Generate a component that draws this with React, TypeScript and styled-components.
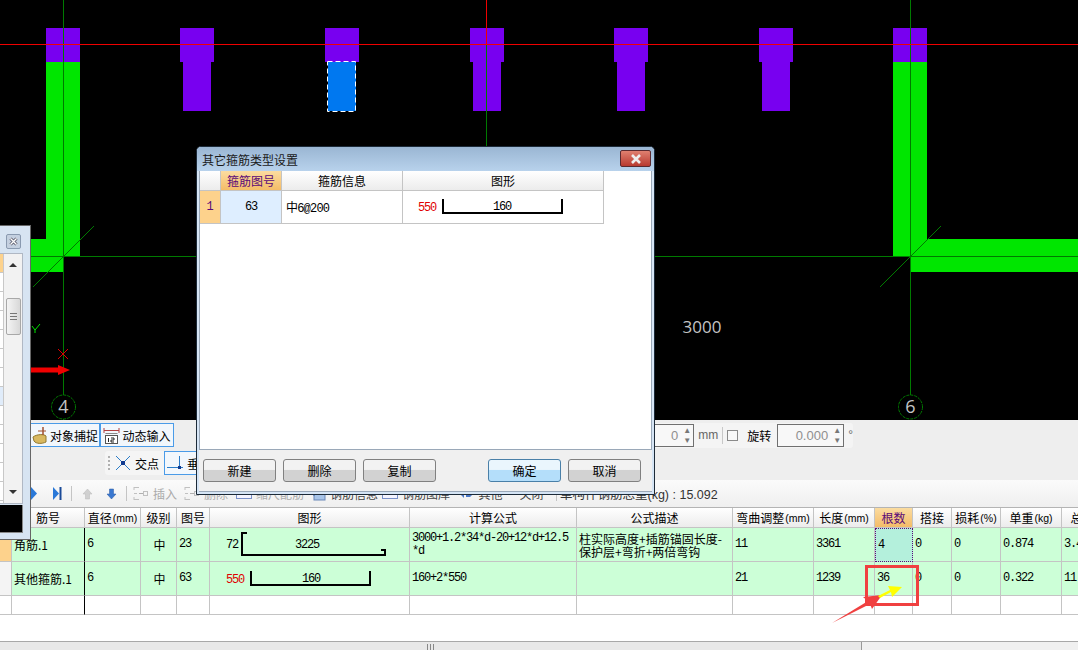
import * as React from 'react';
import styled, { createGlobalStyle } from 'styled-components';

const CJK = '"Noto Sans CJK SC", "Liberation Sans", sans-serif';
const MONO = '"Liberation Mono", "Noto Sans CJK SC", monospace';

// ------------------------------------
// Data
// ------------------------------------

const COLUMNS = '12px 73px 56px 36px 33px 200px 167px 156px 81px 61px 38px 39px 49px 61px 61px';

const HEADERS = [
  { label: '' },
  { label: '筋号' },
  { label: '直径', unit: '(mm)' },
  { label: '级别' },
  { label: '图号' },
  { label: '图形' },
  { label: '计算公式' },
  { label: '公式描述' },
  { label: '弯曲调整', unit: '(mm)' },
  { label: '长度', unit: '(mm)' },
  { label: '根数' },
  { label: '搭接' },
  { label: '损耗', unit: '(%)' },
  { label: '单重', unit: '(kg)' },
  { label: '总重', unit: '(kg)' },
];

const CAPS = [46, 180, 325, 470, 614, 759, 893];
const STEMS = [183, 473, 617, 762];

// ------------------------------------
// Canvas
// ------------------------------------

const CadCanvas = () => (
  <CanvasWrap>
    <svg width="1078" height="420" viewBox="0 0 1078 420">
      <g fill="#00e600">
        <rect x="46" y="62" width="34" height="194" />
        <rect x="31" y="239" width="32" height="33" />
        <rect x="893" y="62" width="34" height="194" />
        <rect x="910" y="239" width="168" height="33" />
      </g>
      <g fill="#7800f0">
        {CAPS.map((x) => (
          <rect key={x} x={x} y="28" width="34" height="34" />
        ))}
        {STEMS.map((x) => (
          <rect key={x} x={x} y="62" width="28" height="49" />
        ))}
      </g>
      <rect x="328" y="62" width="28" height="49" fill="#0078f0" />
      <rect x="327.5" y="61.5" width="28" height="50" fill="none" stroke="#fff" strokeDasharray="5 3" />
      <g stroke="#007a00" strokeWidth="1" fill="none">
        <path d="M63.5 0V395M63.5 419V420M486.5 44V260M910.5 0V395M0 256.5H1078" />
        <path d="M33 287L94 226M880 287L941 226" />
        <circle cx="63.5" cy="407" r="12" strokeDasharray="3 1" />
        <circle cx="910.5" cy="407" r="12" strokeDasharray="3 1" />
      </g>
      <path d="M0 44.5H1078M486.5 0V44" stroke="#f00000" strokeWidth="1" />
      <path d="M32 326L35 330L40 324M35 330V333" stroke="#00e600" fill="none" />
      <path d="M58 349L68 359M68 349L58 359" stroke="#e00000" />
      <path d="M31 367.5H58V365L70 370L58 375V372.5H31Z" fill="#f00000" />
      <CanvasNumber x="63.5" y="413" fontSize="18">4</CanvasNumber>
      <CanvasNumber x="910.5" y="413" fontSize="18">6</CanvasNumber>
      <CanvasNumber x="702" y="333" fontSize="17">3000</CanvasNumber>
    </svg>
  </CanvasWrap>
);

// ------------------------------------
// Rebar shapes
// ------------------------------------

const ShapeHook = () => (
  <svg width="198" height="32" viewBox="0 0 198 32">
    <ShapeText x="16" y="20">72</ShapeText>
    <path d="M36 6V5H32V27H175V22H171" fill="none" stroke="#000" strokeWidth="2" />
    <ShapeText x="97" y="20" textAnchor="middle">3225</ShapeText>
  </svg>
);

const ShapeBracket = () => (
  <svg width="198" height="32" viewBox="0 0 198 32">
    <ShapeText x="16" y="21" fill="#e00000">550</ShapeText>
    <path d="M41 9V23H160V9" fill="none" stroke="#000" strokeWidth="2" />
    <ShapeText x="101" y="20" textAnchor="middle">160</ShapeText>
  </svg>
);

// ------------------------------------
// Small toolbar icons
// ------------------------------------

const SnapIcon = () => (
  <svg width="16" height="18" viewBox="0 0 16 18">
    <path d="M1 11C5 8 12 8 14 10L14 16C10 18 4 18 2 15Z" fill="#d8b860" stroke="#907830" />
    <path d="M11 1V9" stroke="#a05030" strokeWidth="1.5" />
    <path d="M6 5H14" stroke="#a05030" />
  </svg>
);

const InputIcon = () => (
  <svg width="17" height="17" viewBox="0 0 17 17">
    <path d="M1 1V6M16 1V6M1 3.5H16" stroke="#b04040" fill="none" />
    <rect x="2.5" y="8.5" width="12" height="8" fill="#fff" stroke="#555" />
    <path d="M2.5 6.5H14.5" stroke="#888" />
    <path d="M5.5 11V15M8 11H11V13H8V15H11" stroke="#222" fill="none" />
  </svg>
);

const CrossIcon = () => (
  <svg width="16" height="16" viewBox="0 0 16 16">
    <path d="M1 1L15 15M15 1L1 15" stroke="#2a7cc8" />
    <rect x="6" y="6" width="4" height="4" fill="#103a90" />
  </svg>
);

const PerpIcon = () => (
  <svg width="16" height="16" viewBox="0 0 16 16">
    <path d="M0 12.5H16M12.5 1V12" stroke="#2a7cc8" />
    <rect x="11" y="11" width="3" height="3" fill="#103a90" />
  </svg>
);

const PlayIcon = (props: { last?: boolean }) => (
  <svg width="10" height="13" viewBox="0 0 10 13">
    <path d="M1 0L7 6.5L1 13Z" fill="#2a78d8" />
    {props.last && <path d="M8.5 0V13" stroke="#1a4a98" strokeWidth="2" />}
  </svg>
);

const ArrowIcon = (props: { up?: boolean; off?: boolean }) => (
  <svg width="11" height="12" viewBox="0 0 11 12">
    <path
      d={props.up ? 'M5.5 1L10 6H7.5V11H3.5V6H1Z' : 'M5.5 11L10 6H7.5V1H3.5V6H1Z'}
      fill={props.off ? '#d0d0d0' : '#3a78d0'}
      stroke={props.off ? '#b8b8b8' : '#2a58a0'}
      strokeWidth="0.5"
    />
  </svg>
);

const InsertIcon = () => (
  <svg width="16" height="15" viewBox="0 0 16 15">
    <path d="M1 1.5H6M1 7.5H4M1 13.5H6M1 1V4M1 11V14" stroke="#c0c0c0" fill="none" />
    <path d="M6 7.5H10" stroke="#b0b0b0" />
    <rect x="10.5" y="5.5" width="4" height="4" fill="none" stroke="#c0c0c0" />
  </svg>
);

const InfoIcon = () => (
  <svg width="16" height="14" viewBox="0 0 16 14">
    <rect x="4" y="3" width="11" height="10" fill="#a8c4e8" stroke="#6a88b8" />
    <path d="M1 6L6 1L9 4L4 9Z" fill="#4a70b0" />
  </svg>
);

const LibIcon = () => (
  <svg width="16" height="12" viewBox="0 0 16 12">
    <rect x="0.5" y="2.5" width="15" height="8" fill="#f4f4ff" stroke="#7a90c8" />
    <path d="M3 6.5H13" stroke="#c04040" strokeDasharray="2 1" />
  </svg>
);

const MoreIcon = () => (
  <svg width="15" height="12" viewBox="0 0 15 12">
    <path d="M1 6L5 2V10ZM7 3H11L14 6L11 9H7Z" fill="#4a78c8" />
  </svg>
);

// ------------------------------------
// Dialog
// ------------------------------------

const SettingsDialog = () => (
  <Dialog>
    <DialogTitle>
      其它箍筋类型设置
      <CloseButton>
        <svg width="14" height="10" viewBox="0 0 14 10">
          <path d="M3 1L11 9M11 1L3 9" stroke="#eee" strokeWidth="2.6" />
        </svg>
      </CloseButton>
    </DialogTitle>
    <DialogBody>
      <DialogGrid>
        <DialogHead />
        <DialogHead $active>箍筋图号</DialogHead>
        <DialogHead>箍筋信息</DialogHead>
        <DialogHead>图形</DialogHead>
        <DialogIndex>1</DialogIndex>
        <DialogPicked>63</DialogPicked>
        <DialogInfo>中6@200</DialogInfo>
        <DialogShape>
          <svg width="198" height="30" viewBox="0 0 198 30">
            <ShapeText x="15" y="20" fill="#e00000">550</ShapeText>
            <path d="M40 8V22H159V8" fill="none" stroke="#000" strokeWidth="2" />
            <ShapeText x="99" y="19" textAnchor="middle">160</ShapeText>
          </svg>
        </DialogShape>
      </DialogGrid>
    </DialogBody>
    <DialogFooter>
      <DialogButton>新建</DialogButton>
      <DialogButton>删除</DialogButton>
      <DialogButton>复制</DialogButton>
      <FooterGap />
      <DialogButton $primary>确定</DialogButton>
      <DialogButton>取消</DialogButton>
    </DialogFooter>
  </Dialog>
);

// ------------------------------------
// Left floating panel
// ------------------------------------

const FloatingPanel = () => (
  <Panel>
    <PanelHead>
      <PanelClose>
        <svg width="9" height="9" viewBox="0 0 9 9">
          <path d="M1.5 1.5L7.5 7.5M7.5 1.5L1.5 7.5" stroke="#556" strokeWidth="3" />
          <path d="M1.5 1.5L7.5 7.5M7.5 1.5L1.5 7.5" stroke="#fff" strokeWidth="1.4" />
        </svg>
      </PanelClose>
    </PanelHead>
    <PanelBody>
      <PanelList>
        {Array.from({ length: 13 }).map((_, i) => (
          <PanelRow key={i} $tone={i === 0 ? 'head' : i === 7 ? 'picked' : undefined} />
        ))}
      </PanelList>
      <PanelScroll>
        <ScrollUp />
        <ScrollThumb>
          <ThumbGrip />
        </ScrollThumb>
        <ScrollDown />
      </PanelScroll>
    </PanelBody>
    <BlackBox />
  </Panel>
);

// ------------------------------------
// Rebar table
// ------------------------------------

const RebarTable = () => (
  <Table>
    <TableRow>
      {HEADERS.map((h, i) => (
        <HeadCell key={i} $active={h.label === '根数'}>
          {h.label}
          {h.unit && <HeadUnit>{h.unit}</HeadUnit>}
        </HeadCell>
      ))}
    </TableRow>
    <DataRow>
      <IndexCell $picked />
      <NameCell>角筋.1</NameCell>
      <Cell $mono>6</Cell>
      <Cell $center>中</Cell>
      <Cell $mono>23</Cell>
      <ShapeCell><ShapeHook /></ShapeCell>
      <Cell $mono><span>3000+1.2*34*d-20+12*d+12.5<br />*d</span></Cell>
      <Cell><span>柱实际高度+插筋锚固长度-<br />保护层+弯折+两倍弯钩</span></Cell>
      <Cell $mono>11</Cell>
      <Cell $mono>3361</Cell>
      <PickedCell>4</PickedCell>
      <Cell $mono>0</Cell>
      <Cell $mono>0</Cell>
      <Cell $mono>0.874</Cell>
      <Cell $mono>3.496</Cell>
    </DataRow>
    <DataRow>
      <IndexCell />
      <NameCell>其他箍筋.1</NameCell>
      <Cell $mono>6</Cell>
      <Cell $center>中</Cell>
      <Cell $mono>63</Cell>
      <ShapeCell><ShapeBracket /></ShapeCell>
      <Cell $mono>160+2*550</Cell>
      <Cell />
      <Cell $mono>21</Cell>
      <Cell $mono>1239</Cell>
      <Cell $mono>36</Cell>
      <Cell $mono>0</Cell>
      <Cell $mono>0</Cell>
      <Cell $mono>0.322</Cell>
      <Cell $mono>11.592</Cell>
    </DataRow>
    <EmptyRow>
      {HEADERS.map((_, i) => (i === 1 ? <EmptyName key={i} /> : <EmptyCell key={i} />))}
    </EmptyRow>
  </Table>
);

// ------------------------------------
// App
// ------------------------------------

export default function App() {
  return (
    <>
      <GlobalStyle />
      <Page>
        <CadCanvas />
        <Toolbars>
          <SnapRow>
            <ToggleButton $width={70}><SnapIcon />对象捕捉</ToggleButton>
            <ToggleButton $width={74}><InputIcon />动态输入</ToggleButton>
            <OffsetGroup>
              <SpinBox $width={60}>0<SpinArrows>▲<br />▼</SpinArrows></SpinBox>
              <Unit>mm</Unit>
              <ThinSep />
              <CheckBox />
              <Label>旋转</Label>
              <SpinBox $width={67}>0.000<SpinArrows>▲<br />▼</SpinArrows></SpinBox>
              <Unit>°</Unit>
            </OffsetGroup>
          </SnapRow>
          <ModeRow>
            <Grip />
            <ModeItem><CrossIcon />交点</ModeItem>
            <ModeItem $on><PerpIcon />垂点</ModeItem>
          </ModeRow>
          <ActionRow>
            <IconSlot $width={22}><PlayIcon /></IconSlot>
            <IconSlot $width={22}><PlayIcon last /></IconSlot>
            <BarSep />
            <IconSlot $width={24}><ArrowIcon up off /></IconSlot>
            <IconSlot $width={24}><ArrowIcon /></IconSlot>
            <BarSep />
            <ActionItem $width={50} $off><InsertIcon />插入</ActionItem>
            <ActionItem $width={52} $off><InsertIcon />删除</ActionItem>
            <ActionItem $width={76} $off><LibIcon />缩尺配筋</ActionItem>
            <ActionItem $width={72}><InfoIcon />钢筋信息</ActionItem>
            <ActionItem $width={72}><LibIcon />钢筋图库</ActionItem>
            <ActionItem $width={58}><MoreIcon />其他</ActionItem>
            <ActionItem $width={43}>关闭</ActionItem>
            <BarSep />
            <TotalWeight>单构件钢筋总重(kg) : 15.092</TotalWeight>
          </ActionRow>
        </Toolbars>
        <RebarTable />
        <TableBlank />
        <HScroll>
          <HThumb>
            <HGrip />
          </HThumb>
        </HScroll>

        <FloatingPanel />
        <SettingsDialog />

        <Marks width="1078" height="650" viewBox="0 0 1078 650">
          <rect x="866.5" y="566.5" width="51" height="38" fill="none" stroke="#f04040" strokeWidth="3" />
          <path d="M832 623L868 601L863 597L882 595L872 609L870 604Z" fill="#f04040" />
          <path d="M878 596L890 590L888 586L902 587L892 597L891 592L880 598Z" fill="#ffff00" />
        </Marks>
      </Page>
    </>
  );
}

// ------------------------------------
// Styles
// ------------------------------------

const GlobalStyle = createGlobalStyle`
  html, body {
    margin: 0;
    padding: 0;
    overflow: hidden;
    background: #fff;
  }
`;

const Page = styled.div`
  position: relative;
  display: flex;
  flex-direction: column;
  width: 1078px;
  height: 650px;
  overflow: hidden;
  font: 12px ${CJK};
  color: #000;
`;

const CanvasWrap = styled.div`
  height: 420px;
  flex: none;
  background: #000;

  svg {
    display: block;
  }
`;

const CanvasNumber = styled.text`
  fill: #c4c4c4;
  font-family: 'Open Sans', sans-serif;
  text-anchor: middle;
`;

const ShapeText = styled.text`
  font: 12px 'Liberation Mono', monospace;
  letter-spacing: -1.2px;
`;

const Toolbars = styled.div`
  display: flex;
  flex-direction: column;
  height: 87px;
  flex: none;
  background: #eeeeee;
  border-bottom: 1px solid #b4b4b4;
`;

const SnapRow = styled.div`
  display: flex;
  align-items: center;
  height: 24px;
  margin-top: 3px;
  padding-left: 30px;
`;

const ToggleButton = styled.div<{ $width: number }>`
  display: flex;
  align-items: center;
  justify-content: center;
  gap: 2px;
  box-sizing: border-box;
  width: ${(p) => p.$width}px;
  height: 24px;
  border: 1px solid #4a9be8;
  background: #f2f7fc;
  white-space: nowrap;
`;

const OffsetGroup = styled.div`
  display: flex;
  align-items: center;
  gap: 4px;
  height: 25px;
  margin-left: auto;
  margin-right: 225px;
  background: #f4f4f4;
  border-radius: 0 3px 3px 0;
`;

const SpinBox = styled.div<{ $width: number }>`
  position: relative;
  box-sizing: border-box;
  width: ${(p) => p.$width}px;
  height: 23px;
  padding-right: 15px;
  border: 1px solid #707070;
  background: #f8f8f8;
  color: #8f8f8f;
  font: 13px/21px 'Liberation Sans', sans-serif;
  text-align: right;
`;

const SpinArrows = styled.span`
  position: absolute;
  right: 2px;
  top: 1px;
  color: #777;
  font-size: 8px;
  line-height: 10px;
`;

const Unit = styled.span`
  color: #666;
  font: 12px 'Liberation Sans', sans-serif;
`;

const ThinSep = styled.span`
  width: 1px;
  height: 17px;
  background: #c8c8c8;
`;

const CheckBox = styled.span`
  box-sizing: border-box;
  width: 11px;
  height: 11px;
  border: 1px solid #8a8a8a;
  background: #f8f8f8;
`;

const Label = styled.span`
  margin: 0 2px 0 5px;
`;

const ModeRow = styled.div`
  display: flex;
  align-items: center;
  gap: 2px;
  align-self: flex-start;
  width: 110px;
  height: 24px;
  margin: 4px 0 0 105px;
  padding-left: 3px;
  background: #f5f5f5;
  border-radius: 3px 0 0 3px;
`;

const Grip = styled.span`
  width: 2px;
  height: 14px;
  background: repeating-linear-gradient(#b0b0b0 0 2px, transparent 2px 4px);
`;

const ModeItem = styled.div<{ $on?: boolean }>`
  display: flex;
  align-items: center;
  flex: none;
  gap: 4px;
  height: 24px;
  padding: 0 2px;
  box-sizing: border-box;
  white-space: nowrap;
  border: 1px solid ${(p) => (p.$on ? '#4a9be8' : 'transparent')};
  background: ${(p) => (p.$on ? '#f2f7fc' : 'transparent')};
`;

const ActionRow = styled.div`
  display: flex;
  align-items: center;
  height: 27px;
  margin-top: 5px;
  padding-left: 24px;
  color: #444;
  background: linear-gradient(#fbfbfb, #efefef);
`;

const IconSlot = styled.span<{ $width: number }>`
  display: flex;
  align-items: center;
  justify-content: center;
  flex: none;
  width: ${(p) => p.$width}px;
`;

const BarSep = styled.span`
  flex: none;
  width: 1px;
  height: 15px;
  margin: 0 3px;
  background: #c4c4c4;
`;

const ActionItem = styled.span<{ $width: number; $off?: boolean }>`
  display: flex;
  align-items: center;
  justify-content: center;
  flex: none;
  gap: 4px;
  width: ${(p) => p.$width}px;
  color: ${(p) => (p.$off ? '#aaa' : '#444')};
  white-space: nowrap;
`;

const TotalWeight = styled.span`
  white-space: nowrap;
  color: #333;
  font: 12.5px 'Liberation Sans', ${CJK};
`;

const Table = styled.div`
  flex: none;
  width: 1078px;
  overflow: hidden;
`;

const TableRow = styled.div`
  display: grid;
  grid-template-columns: ${COLUMNS};
  height: 20px;
`;

const HeadCell = styled.div<{ $active?: boolean }>`
  display: flex;
  align-items: center;
  justify-content: center;
  overflow: hidden;
  box-sizing: border-box;
  border-right: 1px solid #c4c4c4;
  border-bottom: 1px solid #c4c4c4;
  white-space: nowrap;
  color: ${(p) => (p.$active ? '#5a0a78' : '#000')};
  background: ${(p) =>
    p.$active ? 'linear-gradient(#fbdca0, #f4bc68)' : 'linear-gradient(#fff, #ececec)'};
`;

const HeadUnit = styled.span`
  margin-left: 1px;
  font: 10.5px 'Liberation Sans', sans-serif;
`;

const DataRow = styled(TableRow)`
  height: 34px;
`;

const Cell = styled.div<{ $mono?: boolean; $center?: boolean }>`
  display: flex;
  align-items: center;
  box-sizing: border-box;
  overflow: hidden;
  padding-left: 2px;
  border-right: 1px solid #c4c4c4;
  border-bottom: 1px solid #c4c4c4;
  background: #ccffd7;
  white-space: nowrap;
  line-height: 13px;
  justify-content: ${(p) => (p.$center ? 'center' : 'flex-start')};
  font-family: ${(p) => (p.$mono ? MONO : CJK)};
  letter-spacing: ${(p) => (p.$mono ? '-1.2px' : '0')};
`;

const NameCell = styled(Cell)`
  border-right-color: #000;
`;

const ShapeCell = styled.div`
  box-sizing: border-box;
  border-right: 1px solid #c4c4c4;
  border-bottom: 1px solid #c4c4c4;
  background: #ccffd7;

  svg {
    display: block;
  }
`;

const PickedCell = styled(Cell).attrs({ $mono: true })`
  background: #b4f0dc;
  border: 1px dotted #5a0a78;
`;

const IndexCell = styled.div<{ $picked?: boolean }>`
  border-right: 1px solid #c4c4c4;
  border-bottom: 1px solid #c4c4c4;
  box-sizing: border-box;
  background: ${(p) => (p.$picked ? '#fdd28c' : '#f4f4f4')};
`;

const EmptyRow = styled(TableRow)`
  height: 19px;
`;

const EmptyCell = styled.div`
  box-sizing: border-box;
  border-right: 1px solid #c4c4c4;
  border-bottom: 1px solid #c4c4c4;
`;

const EmptyName = styled(EmptyCell)`
  border-right-color: #000;
`;

const TableBlank = styled.div`
  flex: 1;
  background: #fff;
`;

const HScroll = styled.div`
  flex: none;
  height: 8px;
  background: #f0f0f0;
  border-top: 1px solid #a8a8a8;
`;

const HThumb = styled.div`
  display: flex;
  justify-content: center;
  box-sizing: border-box;
  width: 862px;
  height: 8px;
  border-right: 1px solid #999;
  background: #e8e8e8;
`;

const HGrip = styled.span`
  width: 7px;
  height: 6px;
  margin-top: 2px;
  background: repeating-linear-gradient(90deg, #888 0 1px, transparent 1px 3px);
`;

const Panel = styled.div`
  position: absolute;
  left: 0;
  top: 225px;
  display: flex;
  flex-direction: column;
  box-sizing: border-box;
  width: 31px;
  height: 315px;
  border: 1px solid #666;
  border-left: none;
  background: #d7e4f2;
`;

const PanelHead = styled.div`
  display: flex;
  justify-content: flex-end;
  height: 27px;
  flex: none;
  padding: 8px 9px 0 0;
  box-sizing: border-box;
`;

const PanelClose = styled.div`
  display: flex;
  align-items: center;
  justify-content: center;
  box-sizing: border-box;
  width: 15px;
  height: 15px;
  border: 1px solid #8a9ab0;
  border-radius: 2px;
  background: #c4d0e0;
`;

const PanelBody = styled.div`
  display: flex;
  width: 23px;
  height: 251px;
  flex: none;
  border: 1px solid #b0b8c4;
  border-left: none;
  box-sizing: border-box;
  background: #fff;
`;

const PanelList = styled.div`
  width: 3px;
  flex: none;
  border-right: 1px solid #c8c8c8;
`;

const PanelRow = styled.div<{ $tone?: 'head' | 'picked' }>`
  height: 19px;
  box-sizing: border-box;
  border-bottom: 1px solid #c8c8c8;
  background: ${(p) =>
    p.$tone === 'head' ? '#fdd28c' : p.$tone === 'picked' ? '#e0ecfa' : '#fff'};
`;

const PanelScroll = styled.div`
  display: flex;
  flex-direction: column;
  align-items: center;
  flex: 1;
  background: #f2f2f2;
`;

const ScrollUp = styled.span`
  margin-top: 9px;
  border: 4px solid transparent;
  border-top: none;
  border-bottom: 4px solid #333;
`;

const ScrollDown = styled.span`
  margin-top: auto;
  margin-bottom: 9px;
  border: 4px solid transparent;
  border-bottom: none;
  border-top: 4px solid #333;
`;

const ScrollThumb = styled.div`
  display: flex;
  align-items: center;
  justify-content: center;
  box-sizing: border-box;
  width: 15px;
  height: 37px;
  margin-top: 31px;
  border: 1px solid #a8a8a8;
  border-radius: 2px;
  background: linear-gradient(90deg, #f4f4f4, #d8d8d8);
`;

const ThumbGrip = styled.span`
  width: 7px;
  height: 8px;
  background: repeating-linear-gradient(#777 0 1px, transparent 1px 3px);
`;

const BlackBox = styled.div`
  width: 22px;
  height: 27px;
  margin-top: 1px;
  border-right: 1px solid #888;
  border-bottom: 1px solid #888;
  background: #000;
`;

const Dialog = styled.div`
  position: absolute;
  left: 196px;
  top: 146px;
  display: flex;
  flex-direction: column;
  box-sizing: border-box;
  width: 459px;
  height: 349px;
  padding: 0 2px 2px;
  border: 1px solid #1c2a38;
  border-radius: 5px 5px 0 0;
  background: #d6e5f5;
`;

const DialogTitle = styled.div`
  position: relative;
  display: flex;
  align-items: center;
  flex: none;
  height: 24px;
  margin: 0 -2px;
  padding-left: 5px;
  border-radius: 4px 4px 0 0;
  background: linear-gradient(#9ab6d3, #b8d2ec);
  color: #1a1a1a;
`;

const CloseButton = styled.div`
  position: absolute;
  right: 3px;
  top: 3px;
  display: flex;
  align-items: center;
  justify-content: center;
  box-sizing: border-box;
  width: 31px;
  height: 17px;
  border: 1px solid #5a2a30;
  border-radius: 2px;
  background: linear-gradient(#e08070, #b83a30);
`;

const DialogBody = styled.div`
  flex: none;
  height: 279px;
  box-sizing: border-box;
  border: 1px solid #9aa8b8;
  border-top: none;
  background: #fff;
`;

const DialogGrid = styled.div`
  display: grid;
  grid-template-columns: 21px 61px 121px 201px;
  grid-template-rows: 20px 33px;
  width: 404px;
`;

const DialogHead = styled.div<{ $active?: boolean }>`
  display: flex;
  align-items: center;
  justify-content: center;
  box-sizing: border-box;
  border-right: 1px solid #c4c4c4;
  border-bottom: 1px solid #c4c4c4;
  color: ${(p) => (p.$active ? '#5a0a78' : '#000')};
  background: ${(p) =>
    p.$active ? 'linear-gradient(#fbdca0, #f4bc68)' : 'linear-gradient(#fff, #ececec)'};
`;

const DialogIndex = styled.div`
  display: flex;
  align-items: center;
  justify-content: center;
  box-sizing: border-box;
  border-right: 1px solid #c4c4c4;
  border-bottom: 1px solid #c4c4c4;
  background: #fdd28c;
  color: #5a0a78;
  font-family: ${MONO};
`;

const DialogPicked = styled.div`
  display: flex;
  align-items: center;
  justify-content: center;
  box-sizing: border-box;
  border-right: 1px solid #c4c4c4;
  border-bottom: 1px solid #c4c4c4;
  background: #deeeff;
  font-family: ${MONO};
  letter-spacing: -1.2px;
`;

const DialogInfo = styled.div`
  display: flex;
  align-items: center;
  box-sizing: border-box;
  padding-left: 4px;
  border-right: 1px solid #c4c4c4;
  border-bottom: 1px solid #c4c4c4;
  font-family: ${MONO};
  letter-spacing: -0.8px;
`;

const DialogShape = styled.div`
  box-sizing: border-box;
  border-right: 1px solid #c4c4c4;
  border-bottom: 1px solid #c4c4c4;

  svg {
    display: block;
  }
`;

const DialogFooter = styled.div`
  display: flex;
  align-items: center;
  flex: 1;
  gap: 7px;
  padding-left: 4px;
  border-bottom: 1px solid #9aa8b8;
  background: #f0f0f0;
`;

const FooterGap = styled.span`
  width: 38px;
`;

const DialogButton = styled.div<{ $primary?: boolean }>`
  display: flex;
  align-items: center;
  justify-content: center;
  flex: none;
  box-sizing: border-box;
  width: 73px;
  height: 23px;
  border: 1px solid ${(p) => (p.$primary ? '#4a80a8' : '#808080')};
  border-radius: 3px;
  background: ${(p) =>
    p.$primary
      ? 'linear-gradient(#eaf6fd 0 45%, #b4defa 50% 100%)'
      : 'linear-gradient(#f2f2f2 0 45%, #d2d2d2 50% 100%)'};
`;

const Marks = styled.svg`
  position: absolute;
  left: 0;
  top: 0;
  pointer-events: none;
`;
